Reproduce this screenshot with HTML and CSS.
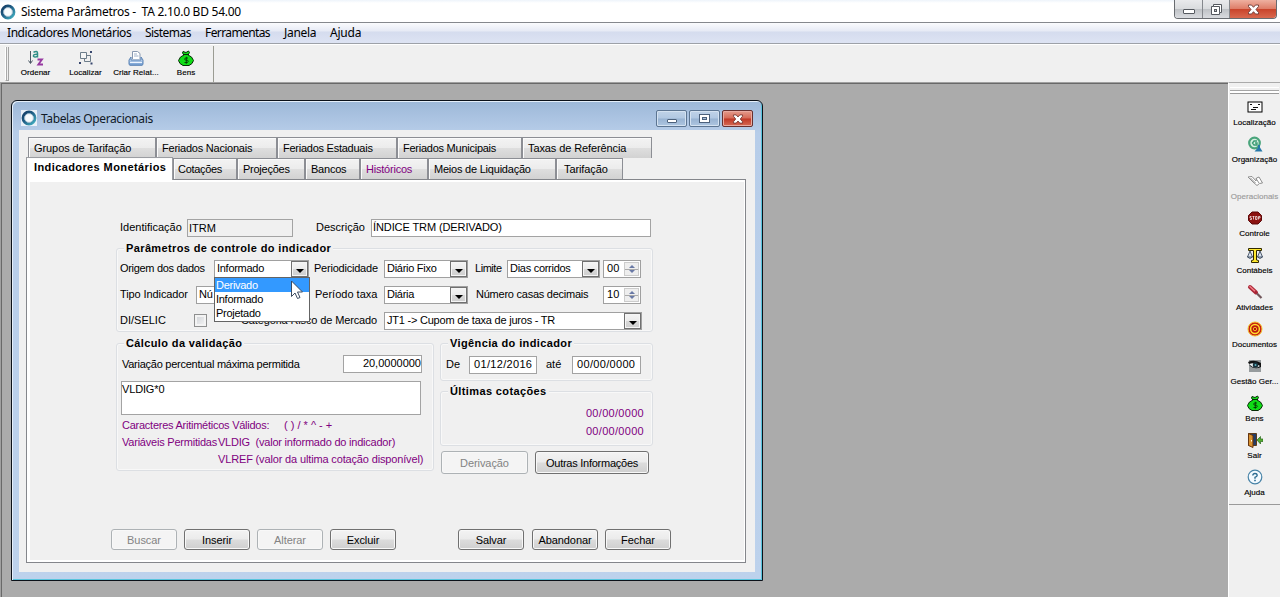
FILE: index.html
```html
<!DOCTYPE html>
<html lang="pt-BR">
<head>
<meta charset="utf-8">
<title>Sistema Parâmetros</title>
<link rel="stylesheet" href="styles.css">
</head>
<body>
<svg class="defs" width="0" height="0">
  <defs>
    <linearGradient id="ring" x1="0" y1="0" x2="1" y2="1"><stop offset="0" stop-color="#123a63"/><stop offset=".45" stop-color="#1f5f86"/><stop offset="1" stop-color="#45b3c4"/></linearGradient>
    <linearGradient id="tray" x1="0" y1="0" x2="0" y2="1"><stop offset="0" stop-color="#dfe9f7"/><stop offset="1" stop-color="#6f9bd0"/></linearGradient>
    <symbol id="logo" viewBox="0 0 16 16"><rect width="16" height="16" fill="#fff" opacity=".75"/><circle cx="8" cy="8" r="6" fill="#f7fbfd" stroke="url(#ring)" stroke-width="2.800"/><circle cx="8" cy="8" r="4.400" fill="none" stroke="#9fb9cc" stroke-width=".8"/></symbol>
    <symbol id="bag" viewBox="0 0 16 16"><path d="M5 1.500 8 2.500l2.500-1.500 1 1.500L10 5l3.500 2 2 3.500-1.500 3-3 2H5l-3-2-1.500-3L2.500 7 6 5 4.500 3Z" fill="#0fdc16" stroke="#062c06"/><path d="M5 4.500h6" stroke="#062c06"/><path d="M10 8H7.500L6.500 9l1 1.200h2l.8 1-.8 1.300H6.500M8.300 6.800v7" fill="none" stroke="#053605" stroke-width=".9"/></symbol>
  </defs>
</svg>
<div class="app">
  <header class="titlebar">
    <svg class="logo" width="16" height="16"><use href="#logo"/></svg>
    <span class="title">Sistema Parâmetros -&nbsp; TA 2.10.0 BD 54.00</span>
    <div class="appbtns">
      <span class="ab min"><svg width="14" height="8" viewBox="0 0 14 8"><rect x="1.500" y="2.500" width="11" height="4" rx=".5" fill="#fff" stroke="#55595f"/></svg></span>
      <span class="ab res"><svg width="14" height="13" viewBox="0 0 14 13"><path d="M4.500 1.500h8v8h-2v2h-8v-8h2z" fill="#fff" stroke="#55595f"/><path d="M4.500 3.500h6v6" fill="none" stroke="#55595f"/><rect x="5.500" y="6.500" width="2" height="2" fill="#ccc" stroke="#55595f"/></svg></span>
      <span class="ab cls"><svg width="13" height="11" viewBox="0 0 13 11"><path d="M1.500 1h3l2 2.300L8.500 1h3v1.500L9 5.500l2.500 3V10h-3l-2-2.300L4.500 10h-3V8.500l2.500-3-2.500-3z" fill="#fff" stroke="#6b3a35" stroke-width=".9"/></svg></span>
    </div>
  </header>
  <nav class="menubar">
    <span class="m1">Indicadores Monetários</span><span class="m2">Sistemas</span><span class="m3">Ferramentas</span><span class="m4">Janela</span><span class="m5">Ajuda</span>
  </nav>
  <div class="toolbar">
    <i class="grip"></i>
    <div class="tools">
      <div class="tool"><svg width="16" height="16" viewBox="0 0 16 16"><path d="M2.500 1v12M.5 10.500l2 3 2-3" fill="none" stroke="#4d5a66"/><path d="M5.500 2.200Q9.500.5 9.500 3v4.500M9.500 4.300Q5 4 5.500 6.300 7 8 9.500 6" fill="none" stroke="#2e8e86" stroke-width="1.500"/><path d="M9.500 9.500H14L10.300 14.500H15" fill="none" stroke="#9638a0" stroke-width="1.800"/></svg><span>Ordenar</span></div>
      <div class="tool"><svg width="16" height="16" viewBox="0 0 16 16"><path d="M2.500 2.500h6v6h-6z" fill="#f6f6f6" stroke="#6d7d8a"/><path d="M8.500 5.500h4v6h-6v-3" fill="none" stroke="#6d7d8a"/><path d="M12 1h2v2h-2zM1 12h2v2H1zM12.500 12.500h2v2h-2z" fill="#37466e"/></svg><span>Localizar</span></div>
      <div class="tool"><svg width="16" height="16" viewBox="0 0 16 16"><path d="M4.500 9V1.500h5l2.500 2V9" fill="#fff" stroke="#8898b0"/><path d="M6 4h3M6 6h4.500" stroke="#9eb0c8"/><path d="m3 7-2 3v4.500l1 .8h12l1-.8V10l-2-3v3H3z" fill="url(#tray)" stroke="#5b83b5"/><path d="M2 12.500h12" stroke="#eef5ff"/></svg><span>Criar Relat...</span></div>
      <div class="tool"><svg width="16" height="16"><use href="#bag"/></svg><span>Bens</span></div>
    </div>
  </div>
  <div class="work">
    <main class="mdi">
      <section class="win">
        <div class="wtitle">
          <svg width="16" height="16"><use href="#logo"/></svg><span class="wt">Tabelas Operacionais</span>
          <div class="wbtns">
            <span class="wb"><svg width="12" height="6" viewBox="0 0 12 6"><rect x="1.500" y="1.500" width="9" height="3" rx=".5" fill="#fff" stroke="#4c617c"/></svg></span>
            <span class="wb"><svg width="11" height="9" viewBox="0 0 11 9"><rect x=".5" y=".5" width="10" height="8" fill="#fff" stroke="#4c617c"/><rect x="3.500" y="3.500" width="4" height="2" fill="#a9bfd9" stroke="#4c617c"/></svg></span>
            <span class="wb wx"><svg width="12" height="10" viewBox="0 0 13 11"><path d="M1.500 1h3l2 2.300L8.500 1h3v1.500L9 5.500l2.500 3V10h-3l-2-2.300L4.500 10h-3V8.500l2.500-3-2.500-3z" fill="#fff" stroke="#70332f" stroke-width=".9"/></svg></span>
          </div>
        </div>
        <div class="wbody">
          <div class="tabs t1">
            <span class="tab a1">Grupos de Tarifação</span><span class="tab a2">Feriados Nacionais</span><span class="tab a3">Feriados Estaduais</span><span class="tab a4">Feriados Municipais</span><span class="tab a5">Taxas de Referência</span>
          </div>
          <div class="tabs t2">
            <span class="tab b0">Indicadores Monetários</span><span class="tab b1">Cotações</span><span class="tab b2">Projeções</span><span class="tab b3">Bancos</span><span class="tab b4">Históricos</span><span class="tab b5">Meios de Liquidação</span><span class="tab b6">Tarifação</span>
          </div>
          <div class="panel">
            <div class="row ident">
              <span class="lb l-id">Identificação</span><span class="inp ro i-id">ITRM</span>
              <span class="lb l-desc">Descrição</span><span class="inp i-desc">ÍNDICE TRM (DERIVADO)</span>
            </div>
            <div class="group g1">
              <b class="leg">Parâmetros de controle do indicador</b>
              <div class="row r1">
                <span class="lb l-or">Origem dos dados</span><span class="cb c-or"><span>Informado</span><i class="dd"></i>
                  <div class="list"><span class="sel">Derivado</span><span>Informado</span><span>Projetado</span>
                    <svg class="cursor" width="14" height="20" viewBox="0 0 14 20"><path d="M1.500 1v15.500l3.500-3.500 2.500 5.500 2.500-1-2.500-5.500h5z" fill="#fff" stroke="#3b4a60"/></svg></div></span>
                <span class="lb l-pe">Periodicidade</span><span class="cb c-pe"><span>Diário Fixo</span><i class="dd"></i></span>
                <span class="lb l-li">Limite</span><span class="cb c-li"><span>Dias corridos</span><i class="dd"></i></span>
                <span class="spin"><span>00</span><i class="ud"></i></span>
              </div>
              <div class="row r2">
                <span class="lb l-ti">Tipo Indicador</span><span class="cb c-ti"><span>Nú</span></span>
                <span class="lb l-ta">Período taxa</span><span class="cb c-ta"><span>Diária</span><i class="dd"></i></span>
                <span class="lb l-nu">Número casas decimais</span><span class="spin"><span>10</span><i class="ud"></i></span>
              </div>
              <div class="row r3">
                <span class="lb l-di">DI/SELIC</span><i class="chk"></i>
                <span class="lb l-ca">Categoria Risco de Mercado</span><span class="cb c-ca"><span>JT1 -&gt; Cupom de taxa de juros - TR</span><i class="dd"></i></span>
              </div>
            </div>
            <div class="cols">
              <div class="group g2">
                <b class="leg">Cálculo da validação</b>
                <div class="row v1"><span class="lb l-va">Variação percentual máxima permitida</span><span class="inp i-va">20,0000000</span></div>
                <div class="area">VLDIG*0</div>
                <div class="note n1"><span>Caracteres Aritiméticos Válidos:</span><span class="ops">( ) / * ^ - +</span></div>
                <div class="note n2"><span>Variáveis Permitidas</span><span>VLDIG&nbsp; (valor informado do indicador)</span></div>
                <div class="note n3"><span>VLREF (valor da ultima cotação disponível)</span></div>
              </div>
              <div class="right">
                <div class="group g3"><b class="leg">Vigência do indicador</b>
                  <div class="row v2"><span class="lb l-de">De</span><span class="inp date d1">01/12/2016</span><span class="lb l-at">até</span><span class="inp date d2">00/00/0000</span></div>
                </div>
                <div class="group g4"><b class="leg">Últimas cotações</b><div class="q">00/00/0000</div><div class="q">00/00/0000</div></div>
                <div class="pair"><span class="btn off">Derivação</span><span class="btn oi">Outras Informações</span></div>
              </div>
            </div>
            <div class="actions">
              <span class="btn off">Buscar</span><span class="btn">Inserir</span><span class="btn off">Alterar</span><span class="btn">Excluir</span><span class="btn sv">Salvar</span><span class="btn ab2">Abandonar</span><span class="btn">Fechar</span>
            </div>
          </div>
        </div>
      </section>
    </main>
    <aside class="side">
      <div class="sgrip"></div>
      <div class="s"><svg width="16" height="16" viewBox="0 0 16 16"><rect x="1" y="3" width="14" height="10" fill="#fff" stroke="#000"/><path d="M3 5.500h2M6 8.500h5M4 10.500h5M11 5.500h2" stroke="#111"/></svg><span>Localização</span></div>
      <div class="s"><svg width="16" height="16" viewBox="0 0 16 16"><circle cx="7.500" cy="7" r="5.300" fill="#d7efe2" stroke="#4aa57c" stroke-width="2.200"/><path d="M10 5H7L5.500 7 7 9h3V7H8" fill="none" stroke="#3d9c74" stroke-width="1.400"/><path d="M7.500 15.500h8L13 11.500V9h-2v2.500z" fill="#2878a8"/></svg><span>Organização</span></div>
      <div class="s dis"><svg width="16" height="16" viewBox="0 0 16 16"><path d="m1 4 4-.5L9 8l.5-3 2.500-1 3.500 6-3 .5-2.500 2L6 9zM3.500 5l5 5M9 5.500l3 4.500" fill="#fff" stroke="#8e8e8e"/></svg><span>Operacionais</span></div>
      <div class="s"><svg width="16" height="16" viewBox="0 0 16 16"><path d="M5 2h6l3.500 3.500v5L11 14H5l-3.500-3.500v-5z" fill="#8b1210" stroke="#5b0808"/><path d="M4.500 6.500H3V8h1.500v1.500H3M5.500 6.500h2M6.500 6.500v3M8.500 6.500h1.500v3H8.500zM11.500 9.500v-3H13V8h-1.500" fill="none" stroke="#fff" stroke-width=".7"/></svg><span>Controle</span></div>
      <div class="s"><svg width="16" height="16" viewBox="0 0 16 16"><path d="M1.500 1.500h13v2h-5V13l2 .5v2h-7v-2l2-.5V3.500h-5z" fill="#ffe92e" stroke="#302800"/><path d="m3 4-2.500 6h5zM13 4l-2.500 6h5zM.5 10q2.500 3 5 0M10.500 10q2.500 3 5 0" fill="#dce5f1" stroke="#25354a" stroke-width=".8"/></svg><span>Contábeis</span></div>
      <div class="s"><svg width="16" height="16" viewBox="0 0 16 16"><path d="m3 3 6 5.500" stroke="#a92536" stroke-width="4" stroke-linecap="round"/><path d="m2.500 2.300 5.500 5" stroke="#f47e88" stroke-width="1.500"/><path d="m10 9.500 4.500 4.500" stroke="#70565a" stroke-width="2.200"/></svg><span>Atividades</span></div>
      <div class="s"><svg width="16" height="16" viewBox="0 0 16 16"><circle cx="8" cy="8" r="7" fill="#c81e12" stroke="#f3c62a"/><circle cx="8" cy="8" r="4.400" fill="#bd1710" stroke="#ffdf2c" stroke-width="1.500"/><circle cx="8" cy="8" r="1.700" fill="#b6150f" stroke="#ffdf2c" stroke-width=".8"/></svg><span>Documentos</span></div>
      <div class="s"><svg width="16" height="16" viewBox="0 0 16 16"><path d="M2 2h12v12H2z" fill="#969b9d"/><path d="M1 4q6-3 13 1v4q-6 3-11-1z" fill="#111"/><path d="M2 6q6-2 11 2-5 3.500-10-1z" fill="#e5edf0"/><circle cx="8.500" cy="7" r="2.700" fill="#18303a"/><circle cx="8.500" cy="7" r="1" fill="#5bb0bf"/></svg><span>Gestão Ger...</span></div>
      <div class="s"><svg width="16" height="16"><use href="#bag"/></svg><span>Bens</span></div>
      <div class="s"><svg width="16" height="16" viewBox="0 0 16 16"><path d="M1.500 1.500h8v12h-8z" fill="#243d68" stroke="#5e3c1c"/><path d="m1.500 1.500 4.500 2v12l-4.500-2z" fill="#d9922f" stroke="#663510"/><path d="M4.500 8v1.500" stroke="#fff"/><path d="m10 8 3.500-3.500V7H16v2.500h-2.500V12z" fill="#54ad32" stroke="#28691b" stroke-width=".7"/></svg><span>Sair</span></div>
      <div class="s"><svg width="16" height="16" viewBox="0 0 16 16"><circle cx="8" cy="8" r="6.800" fill="#f4faff" stroke="#4783a7" stroke-width="1.200"/><path d="M5.800 6.500Q6 4.500 8 4.500t2.200 1.700Q10.200 7.500 8 8.300v1.400" fill="none" stroke="#2d6c92" stroke-width="1.400"/><path d="M7.200 10.700h1.600v1.500H7.200z" fill="#2d6c92"/></svg><span>Ajuda</span></div>
      <div class="send"></div>
    </aside>
  </div>
</div>
</body>
</html>
```
FILE: styles.css
```css
* { box-sizing: border-box; }
body { margin: 0; overflow: hidden; background: #f0f0f0; font: 11px/13px "Liberation Sans", Arial, sans-serif; color: #000; }
.defs { position: absolute; }
i { font-style: normal; display: block; }
svg { display: block; flex: none; }
span { white-space: nowrap; }
.app { width: 1280px; height: 597px; display: flex; flex-direction: column; }

.titlebar { height: 23px; flex: none; display: flex; align-items: flex-start; background: linear-gradient(#eef4fb, #fff 3px); border-bottom: 1px solid #85888d; }
.titlebar .logo { margin-top: 4px; }
.title { font: 12px/16px "Noto Sans", sans-serif; letter-spacing: -.26px; margin: 4px 0 0 5px; flex: 1; }
.appbtns { display: flex; width: 103px; height: 19px; margin-right: 3px; border: 1px solid #686b70; border-top: 0; border-radius: 0 0 4px 4px; overflow: hidden; }
.ab { display: flex; align-items: center; justify-content: center; background: linear-gradient(#e9eaec, #d9dbde 50%, #bfc2c6 52%, #d9dbdf); border-right: 1px solid #85888d; }
.min { width: 28px; padding-top: 4px; }
.res { width: 27px; }
.cls { flex: 1; border: 0; background: linear-gradient(#eeb0a0, #de7d68 48%, #c9442b 52%, #d9694f); }

.menubar { height: 20px; flex: none; display: flex; padding-left: 7px; font: 12px/20px "Noto Sans", sans-serif; background: linear-gradient(#fafbfd, #e6eaf5 40%, #d5dcee 45%, #dde3f3); }
.m1 { width: 138px; letter-spacing: -.44px; }
.m2 { width: 60px; letter-spacing: -.55px; }
.m3 { width: 79px; letter-spacing: -.6px; }
.m4 { width: 46px; letter-spacing: -.3px; }
.m5 { letter-spacing: -.2px; }

.toolbar { height: 39px; flex: none; display: flex; border-top: 1px solid #9da1a8; background: #f0f0f0; box-shadow: inset 0 1px #fff; padding-top: 2px; }
.grip { width: 4px; margin: 1px 0 1px 5px; border: solid #a5a5a5; border-left-color: #fff; border-width: 0 1px 1px; box-shadow: inset 1px 0 #aaa; }
.tools { display: flex; width: 205px; padding-left: 2px; border-right: 1px solid #9b9c93; }
.tool { width: 50px; display: flex; flex-direction: column; align-items: center; padding-top: 4px; }
.tool span, .s span { font: 8px/9px "Liberation Sans", Arial, sans-serif; letter-spacing: .05px; -webkit-text-stroke: .15px #000; }
.tool span { margin-top: 2px; }
.tool:nth-child(-n+2) { padding-right: 1px; }

.work { flex: 1; display: flex; min-height: 0; }
.mdi { position: relative; flex: 1; background: #ababab; border: 1px solid #a0a0a0; border-right: 0; border-bottom: 0; box-shadow: inset 1px 1px #696969; }
.side { width: 52px; border-left: 1px solid #fff; border-top: 1px solid #aaa; display: flex; flex-direction: column; align-items: center; background: #f0f0f0; }
.sgrip { width: 49px; height: 7px; margin: 4px 0 5px; border-bottom: 1px solid #999; border-top: 1px solid #fff; box-shadow: inset 0 2px #f0f0f0, inset 0 3px #a5a5a5, inset 0 5px #fff; }
.s { height: 37px; flex: none; width: 52px; display: flex; flex-direction: column; align-items: center; }
.s span { margin-top: 3px; letter-spacing: .02px; }
.s.dis span { color: #9b9b9b; -webkit-text-stroke-color: #9b9b9b; }
.send { width: 100%; border-top: 1px solid #9a9a9a; margin-top: -2px; }

.win { position: absolute; left: 10px; top: 17px; width: 752px; height: 481px; border: 1px solid #0b1119; border-radius: 6px 6px 0 0; box-shadow: inset 1px 1px #e5effa, inset -1px -1px #58c4dc; background: linear-gradient(#9db8d8, #b7cde9 32px, #bdd2ec); padding: 0 7px 8px; display: flex; flex-direction: column; }
.wtitle { height: 29px; flex: none; display: flex; padding: 9px 2px 0 2px; }
.wt { font: 12px/16px "Noto Sans", sans-serif; letter-spacing: -.38px; flex: 1; margin: 1px 0 0 4px; color: #101a28; }
.wbtns { display: flex; gap: 2px; }
.wb { width: 31px; height: 17px; border: 1px solid #5c7592; border-radius: 2px; box-shadow: inset 0 0 0 1px #d4e2f1; background: linear-gradient(#c0d3e8, #b1c8e2 48%, #98b3d2 52%, #aec6e1); display: flex; align-items: center; justify-content: center; }
.wb:first-child { padding-top: 4px; }
.wx { border-color: #67302f; box-shadow: inset 0 0 0 1px #e9aaa0; background: linear-gradient(#e49c8d, #d66a57 48%, #c03826 52%, #d66b55); }
.wbody { flex: 1; background: #f0f0f0; padding: 7px 9px 9px 7px; display: flex; flex-direction: column; }

.tabs { display: flex; }
.t1 { height: 21px; padding-left: 2px; }
.t2 { height: 21px; }
.tab { height: 21px; border: 1px solid #8c8e94; border-width: 1px 1px 0; background: linear-gradient(#f3f3f3, #ececec 48%, #dedede 52%, #d2d2d2); padding: 4px 0 0 5px; line-height: 13px; box-shadow: inset 1px 1px #fbfbfb; letter-spacing: -.22px; }
.a1 { width: 128px; letter-spacing: -.08px; }
.a2 { width: 121px; }
.a3 { width: 120px; letter-spacing: -.25px; }
.a4 { width: 125px; letter-spacing: -.25px; }
.a5 { width: 130px; letter-spacing: -.1px; }
.b0 { width: 147px; height: 23px; margin: -1px 0; background: #fff; font-weight: bold; letter-spacing: .4px; padding: 3px 0 0 7px; z-index: 1; border-color: #9b9da2; }
.b1 { width: 64px; padding-left: 4px; letter-spacing: -.3px; }
.b2 { width: 68px; letter-spacing: -.25px; }
.b3 { width: 55px; }
.b4 { width: 68px; color: #800080; }
.b5 { width: 128px; }
.b6 { width: 67px; padding-left: 7px; letter-spacing: -.1px; }
.panel { flex: 1; border: 1px solid #84868b; box-shadow: inset 3px 0 #fff, inset 0 2px #fff, inset 0 -2px #fff, inset -1px 0 #fff; padding: 39px 0 0 89px; }

.row { display: flex; }
.lb { flex: none; padding-top: 2px; }
.inp { flex: none; height: 18px; border: 1px solid #a3a3a3; background: #fff; line-height: 15px; padding-left: 1px; }
.ro { background: #f0f0f0; padding-top: 1px; }
.ident { padding-left: 4px; height: 29px; }
.l-id { width: 67px; }
.i-id { width: 106px; }
.l-desc { width: 55px; margin-left: 23px; }
.i-desc { width: 280px; letter-spacing: -.1px; }

.group { border: 1px solid #dcdfe3; border-radius: 3px; box-shadow: inset 0 0 0 1px #f8f8f8; }
.leg { display: table; background: #f0f0f0; font-size: 11px; line-height: 13px; margin: -7px 0 0 7px; padding: 0 2px; letter-spacing: .38px; }
.g1 { width: 537px; height: 84px; }
.g1 .row { height: 26px; padding-left: 3px; }
.g1 .r1 { margin-top: 5px; }
.cb, .spin { position: relative; flex: none; height: 18px; border: 1px solid #a0a0a0; background: #fff; display: flex; justify-content: space-between; line-height: 15px; padding-left: 2px; letter-spacing: -.28px; }
.dd { width: 17px; height: 16px; border: 1px solid #707070; background: linear-gradient(#f4f4f4, #ebebeb 50%, #d8d8d8 52%, #cfcfcf); box-shadow: inset 0 0 0 1px #f5f5f5; display: flex; align-items: center; justify-content: center; }
.dd::after { content: ""; border: 4px solid transparent; border-top-color: #000; border-bottom: 0; margin-top: 4px; }
.l-or { width: 94px; letter-spacing: -.32px; }
.c-or { width: 95px; }
.l-pe { width: 70px; margin-left: 5px; letter-spacing: -.22px; }
.c-pe { width: 84px; }
.l-li { width: 32px; margin-left: 7px; letter-spacing: -.45px; }
.c-li { width: 93px; }
.spin { width: 38px; margin-left: 3px; padding-left: 3px; letter-spacing: .2px; }
.ud { width: 15px; height: 14px; margin: 1px; background: linear-gradient(#eee 0 6px, #aaa 6px 7px, #eee 7px); border: 1px solid #ccc; display: flex; flex-direction: column; align-items: center; justify-content: space-between; padding: 2px 0; }
.ud::before { content: ""; border: 3px solid transparent; border-bottom-color: #6979a5; border-top: 0; }
.ud::after { content: ""; border: 3px solid transparent; border-top-color: #6979a5; border-bottom: 0; }
.l-ti { width: 76px; letter-spacing: -.1px; }
.c-ti { width: 114px; }
.l-ta { width: 69px; margin-left: 5px; }
.c-ta { width: 84px; }
.l-nu { width: 124px; margin-left: 8px; letter-spacing: -.24px; }
.l-di { width: 74px; }
.chk { width: 13px; height: 13px; margin-top: 2px; border: 1px solid #8e8f8f; background: linear-gradient(135deg, #cdd0d4, #f6f6f6); box-shadow: inset 0 0 0 2px #f3f3f3; }
.l-ca { width: 143px; margin-left: 34px; letter-spacing: -.13px; }
.c-ca { width: 258px; letter-spacing: -.22px; }
.list { position: absolute; z-index: 2; left: -1px; top: 16px; width: 96px; height: 45px; border: 1px solid #646464; background: #fff; display: flex; flex-direction: column; }
.list span { height: 14px; line-height: 15px; padding-left: 1px; }
.list .sel { background: #3399ff; color: #fff; }
.cursor { position: absolute; left: 75px; top: 2px; }

.cols { display: flex; gap: 6px; margin-top: 11px; }
.g2 { width: 318px; height: 128px; }
.v1 { padding-left: 5px; margin-top: 5px; height: 26px; }
.l-va { width: 221px; padding-top: 3px; letter-spacing: -.26px; }
.i-va { width: 79px; text-align: right; }
.area { width: 300px; height: 34px; margin-left: 4px; border: 1px solid #a3a3a3; background: #fff; line-height: 15px; padding-left: 0; letter-spacing: -.15px; }
.note { display: flex; height: 17px; padding-left: 5px; color: #800080; line-height: 17px; letter-spacing: -.25px; }
.n1 { margin-top: 2px; }
.n1 span:first-child { width: 162px; }
.n1 .ops { letter-spacing: 0; }
.n2 { letter-spacing: -.22px; }
.n2 span:first-child { width: 96px; }
.n3 { padding-left: 101px; letter-spacing: -.15px; }
.g3 { width: 213px; height: 38px; }
.v2 { padding-left: 5px; margin-top: 6px; }
.l-de { width: 23px; }
.d1 { width: 68px; }
.d2 { width: 69px; }
.date { padding-left: 4px; letter-spacing: .32px; }
.l-at { width: 26px; margin-left: 9px; }
.g4 { width: 213px; height: 55px; margin-top: 10px; }
.q { color: #800080; text-align: right; padding-right: 8px; line-height: 18px; letter-spacing: .3px; }
.g4 .leg { margin-bottom: 6px; }
.pair { display: flex; gap: 7px; margin: 5px 0 0 1px; }
.btn { display: flex; align-items: center; justify-content: center; width: 66px; height: 21px; padding-top: 1px; border: 1px solid #707070; border-radius: 3px; background: linear-gradient(#f3f3f3, #ebebeb 48%, #dcdcdc 52%, #cfcfcf); box-shadow: inset 0 0 0 1px #f8f8f8; letter-spacing: -.08px; }
.pair .btn { width: 87px; height: 23px; }
.pair .oi { width: 114px; letter-spacing: -.25px; }
.btn.off { color: #838383; border-color: #adb2b5; background: #f4f4f4; }
.actions { display: flex; gap: 7px; margin: 55px 0 0 -5px; }
.sv { margin-left: 55px; }
.ab2 { margin-left: 1px; }
```
